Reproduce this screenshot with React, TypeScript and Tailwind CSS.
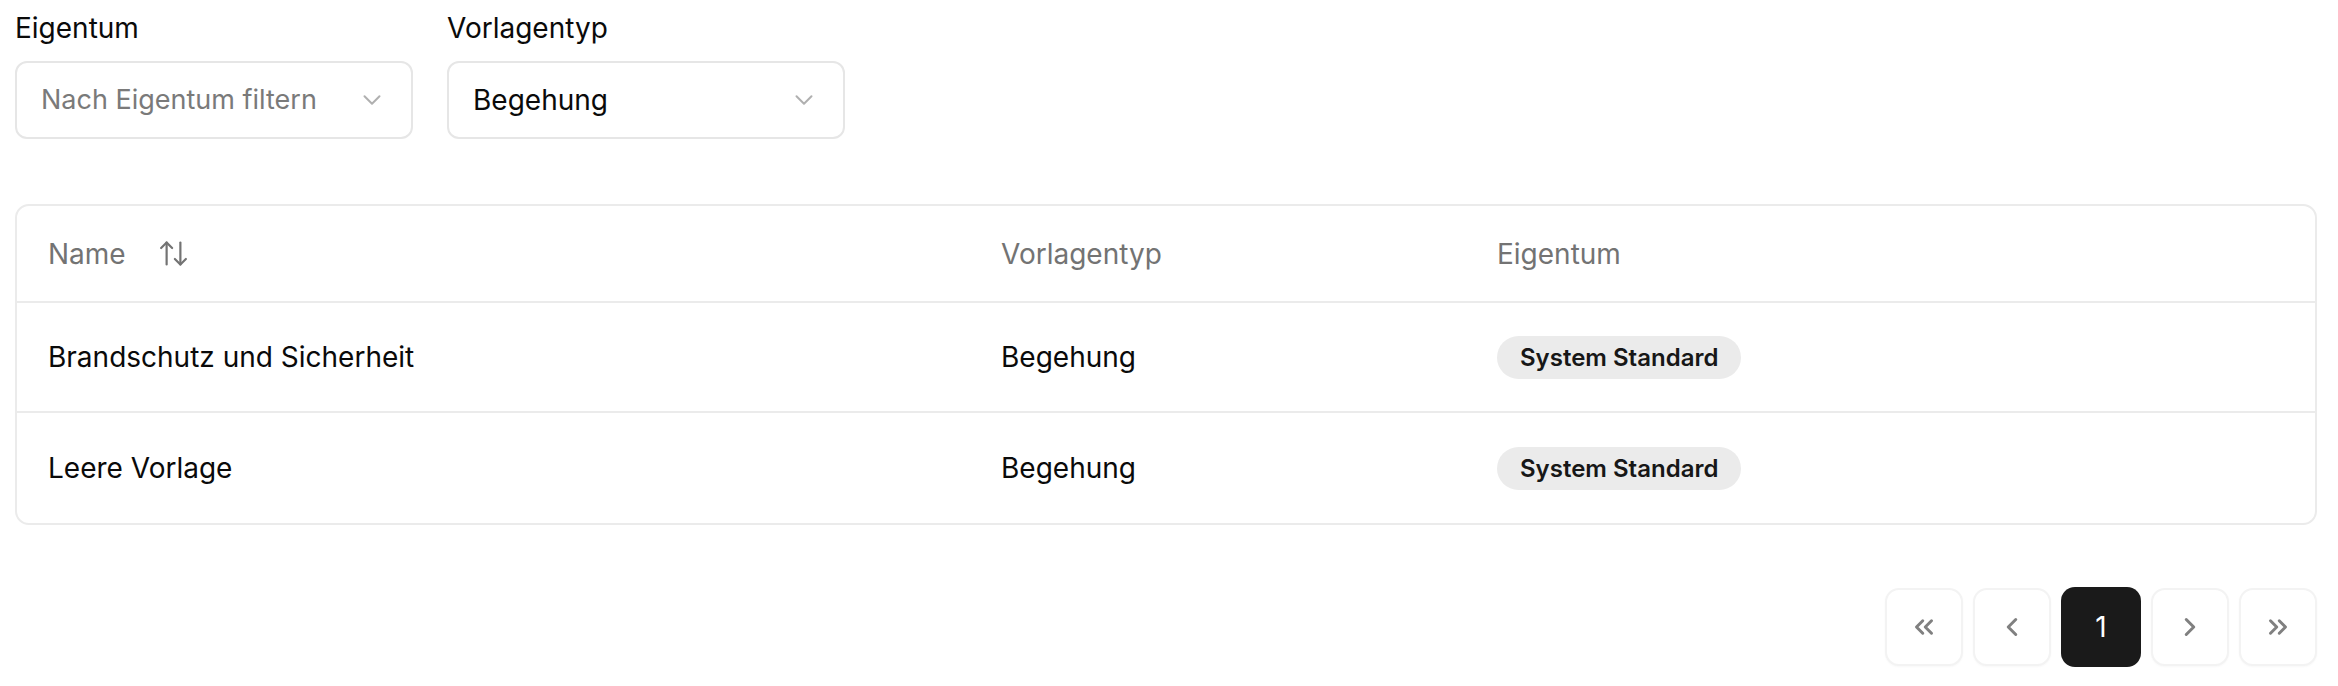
import React from "react";
import { ArrowUpDown, ChevronDown, ChevronLeft, ChevronRight, ChevronsLeft, ChevronsRight } from "lucide-react";

type Row = {
  name: string;
  type: string;
  owner: string;
};

const rows: Row[] = [
  { name: "Brandschutz und Sicherheit", type: "Begehung", owner: "System Standard" },
  { name: "Leere Vorlage", type: "Begehung", owner: "System Standard" },
];

const SelectBox = ({ label, value, placeholder }: { label: string; value?: string; placeholder?: string }) => (
  <div className="flex flex-col gap-[15px]">
    <span className="text-[28px] leading-[36px] text-[#0a0a0a]">{label}</span>
    <div className="flex h-[78px] w-[398px] items-center justify-between rounded-[12px] border-2 border-[#e6e6e6] bg-white pl-[24px] pr-[24px]">
      {value ? (
        <span className="text-[28px] text-[#0a0a0a]">{value}</span>
      ) : (
        <span className="text-[27px] text-[#7a7a7a]">{placeholder}</span>
      )}
      <ChevronDown size={30} strokeWidth={1.6} className="text-[#b0b0b0]" />
    </div>
  </div>
);

const PageButton = ({ children, active = false }: { children: React.ReactNode; active?: boolean }) =>
  active ? (
    <div className="flex h-[80px] w-[80px] items-center justify-center rounded-[14px] bg-[#1a1a1a] text-[28px] text-white">
      {children}
    </div>
  ) : (
    <div className="flex h-[78px] w-[78px] items-center justify-center rounded-[14px] border-2 border-[#f3f3f3] bg-white text-[#808080] shadow-[0_1px_2px_rgba(0,0,0,0.03)]">
      {children}
    </div>
  );

export default function App() {
  return (
    <div className="min-h-[686px] bg-white pl-[15px] pr-[21px] pt-[10px] font-['Inter',sans-serif] text-[#0a0a0a] antialiased">
      <div className="flex gap-[34px]">
        <SelectBox label="Eigentum" placeholder="Nach Eigentum filtern" />
        <SelectBox label="Vorlagentyp" value="Begehung" />
      </div>

      <div className="mt-[65px] overflow-hidden rounded-[14px] border-2 border-[#ebebeb]">
        <div className="grid h-[97px] grid-cols-[953px_496px_1fr] items-center border-b-2 border-[#ebebeb] text-[28px] text-[#737373]">
          <div className="flex items-center gap-[31px] px-[31px]">
            <span>Name</span>
            <ArrowUpDown size={33} strokeWidth={1.6} className="text-[#737373]" />
          </div>
          <div className="px-[31px]">Vorlagentyp</div>
          <div className="px-[31px]">Eigentum</div>
        </div>
        {rows.map((row, i) => (
          <div
            key={row.name}
            className={`grid h-[110px] grid-cols-[953px_496px_1fr] items-center text-[28px] ${
              i < rows.length - 1 ? "border-b-2 border-[#ebebeb]" : ""
            }`}
          >
            <div className="px-[31px]">{row.name}</div>
            <div className="px-[31px]">{row.type}</div>
            <div className="px-[31px]">
              <span className="inline-flex h-[43px] items-center rounded-full bg-[#ebebeb] px-[23px] text-[24px] font-semibold text-[#171717]">
                {row.owner}
              </span>
            </div>
          </div>
        ))}
      </div>

      <div className="mt-[62px] flex items-center justify-end gap-[10px]">
        <PageButton>
          <ChevronsLeft size={30} strokeWidth={2.4} />
        </PageButton>
        <PageButton>
          <ChevronLeft size={30} strokeWidth={2.4} />
        </PageButton>
        <PageButton active>1</PageButton>
        <PageButton>
          <ChevronRight size={30} strokeWidth={2.4} />
        </PageButton>
        <PageButton>
          <ChevronsRight size={30} strokeWidth={2.4} />
        </PageButton>
      </div>
    </div>
  );
}
